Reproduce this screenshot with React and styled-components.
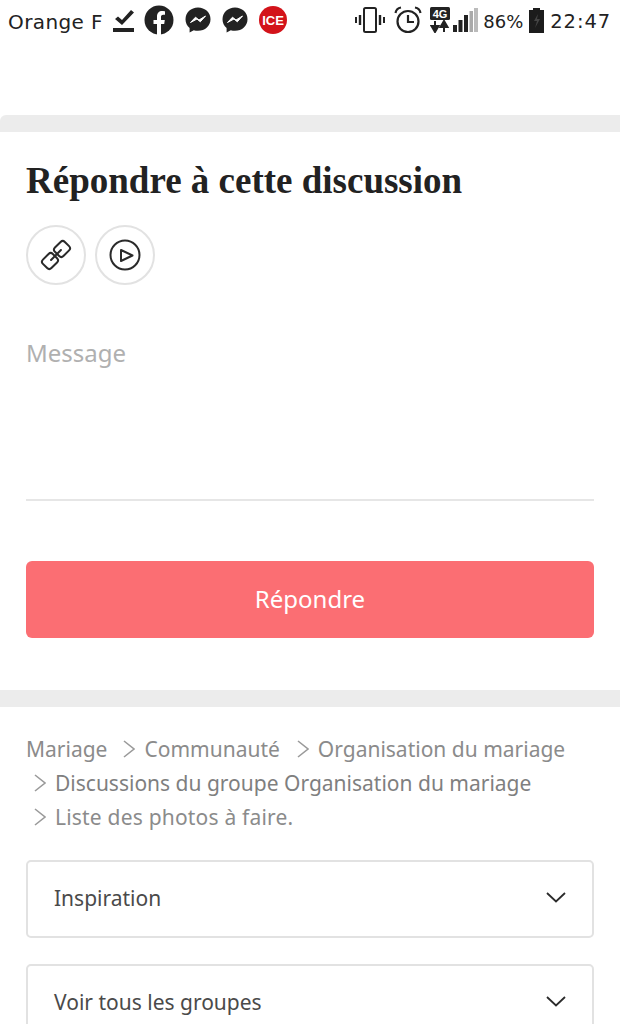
import React from "react";
import styled, { createGlobalStyle } from "styled-components";

const Global = createGlobalStyle`
  html, body { margin: 0; padding: 0; background: #fff; }
  body { font-family: "Noto Sans", sans-serif; overflow: hidden; }
`;

const Page = styled.div`
  width: 620px;
  height: 1024px;
  overflow: hidden;
`;

const StatusBar = styled.div`
  height: 40px;
  padding: 0 9px 0 8px;
  display: flex;
  align-items: center;
  justify-content: space-between;
  color: #222;
  box-sizing: border-box;
`;

const StatusGroup = styled.div`
  display: flex;
  align-items: center;
  gap: ${p => p.$gap || 8}px;
`;

const StatusText = styled.span`
  font-family: "DejaVu Sans", sans-serif;
  font-size: ${p => p.$size || 19}px;
  letter-spacing: ${p => p.$spacing || 0}px;
  margin-top: 3px;
  white-space: nowrap;
`;

const Spacer = styled.div`
  height: 75px;
`;

const Band = styled.div`
  height: 17px;
  background: #ececec;
  border-radius: ${p => (p.$round ? "6px 0 0 0" : "0")};
`;

const ReplySection = styled.section`
  height: 558px;
  box-sizing: border-box;
  padding: 26px 26px 0;
`;

const Title = styled.h2`
  margin: 0;
  font-family: "Liberation Serif", serif;
  font-weight: 700;
  font-size: 37px;
  line-height: 46px;
  white-space: nowrap;
  color: #222;
`;

const Tools = styled.div`
  display: flex;
  gap: 9px;
  margin-top: 21px;
`;

const RoundButton = styled.div`
  width: 60px;
  height: 60px;
  box-sizing: border-box;
  border: 2px solid #e2e2e2;
  border-radius: 50%;
  display: flex;
  align-items: center;
  justify-content: center;
  color: #2a2a2a;
`;

const MessageField = styled.div`
  height: 161px;
  margin-top: 53px;
  border-bottom: 2px solid #e6e6e6;
  font-size: 24px;
  line-height: 30px;
  color: #b0b0b0;
`;

const SubmitButton = styled.div`
  margin-top: 60px;
  height: 77px;
  box-sizing: border-box;
  padding-bottom: 2px;
  border-radius: 6px;
  background: #fb6e73;
  color: #fff;
  font-size: 24px;
  display: flex;
  align-items: center;
  justify-content: center;
`;

const Lower = styled.div`
  padding: 25px 26px 0;
`;

const Crumbs = styled.div`
  font-size: 21px;
  line-height: 34px;
  color: #8b8b8b;
`;

const CrumbLine = styled.div`
  display: flex;
  align-items: center;
  white-space: nowrap;
  gap: 9px;
  padding-left: ${p => p.$indent || 0}px;
`;

const Crumb = styled.span`
  color: ${p => (p.$strong ? "#7f7f7f" : "#8b8b8b")};
  margin-right: ${p => p.$after || 0}px;
  letter-spacing: ${p => p.$spacing || 0}px;
`;

const Select = styled.div`
  height: 78px;
  margin-top: 26px;
  box-sizing: border-box;
  border: 2px solid #e2e2e2;
  border-radius: 5px;
  padding: 0 26px 3px 26px;
  display: flex;
  align-items: center;
  justify-content: space-between;
  font-size: 21px;
  color: #4a4a4a;
`;

const Chevron = () => (
  <svg width="20" height="11" viewBox="0 0 20 11" fill="none" stroke="#2b2b2b" strokeWidth="1.8">
    <path d="M1 1 L10 9.5 L19 1" />
  </svg>
);

const CrumbArrow = () => (
  <svg width="12" height="20" viewBox="0 0 12 20" fill="none" stroke="#9a9a9a" strokeWidth="1.6">
    <path d="M1 2 L11 10 L1 18" />
  </svg>
);

const LinkIcon = () => (
  <svg width="32" height="32" viewBox="0 0 32 32" fill="none" stroke="currentColor" strokeWidth="2" strokeLinecap="round">
    <g transform="rotate(-45 16 16)">
      <rect x="0.5" y="10" width="14" height="12" rx="3" />
      <rect x="17.5" y="10" width="14" height="12" rx="3" />
      <path d="M9 16 H23" />
    </g>
  </svg>
);

const PlayIcon = () => (
  <svg width="32" height="32" viewBox="0 0 32 32" fill="none" stroke="currentColor" strokeWidth="2">
    <circle cx="16" cy="16" r="14.5" />
    <path d="M12 11 L23.5 16.5 L12 22 Z" strokeLinejoin="round" />
  </svg>
);

const CheckTray = () => (
  <svg width="21" height="24" viewBox="0 0 21 24" fill="#222">
    <path d="M2 11 L5 8.5 L9 12 L18 2 L21 4.5 L9 17 Z" />
    <rect x="0" y="20" width="21" height="4" />
  </svg>
);

const Facebook = () => (
  <svg width="30" height="30" viewBox="0 0 30 30">
    <circle cx="15" cy="15" r="14.5" fill="#222" />
    <path d="M13 30 V19 H9.5 V15 H13 V11.5 C13 8 15 6 18.2 6 C19.6 6 21 6.3 21 6.3 V9.8 H19.2 C17.5 9.8 17 10.8 17 12 V15 H20.8 L20.2 19 H17 V30 Z" fill="#fff" />
  </svg>
);

const Messenger = () => (
  <svg width="26" height="26" viewBox="0 0 26 26">
    <path d="M13 0.5 C6 0.5 0.5 5.5 0.5 12.2 C0.5 15.8 2 18.8 4.6 20.9 V25.5 L8.8 23.2 C10.1 23.6 11.5 23.8 13 23.8 C20 23.8 25.5 18.8 25.5 12.2 C25.5 5.5 20 0.5 13 0.5 Z" fill="#222" />
    <path d="M5.5 15.5 L10.5 10.2 L14 13 L20.5 9 L15.3 14.8 L12 12 Z" fill="#fff" stroke="#fff" strokeWidth="1" />
  </svg>
);

const IceBadge = () => (
  <svg width="28" height="28" viewBox="0 0 28 28">
    <circle cx="14" cy="14" r="14" fill="#d3131a" />
    <text x="14" y="19" textAnchor="middle" fontFamily="Liberation Sans, sans-serif" fontWeight="700" fontSize="13" fill="#fff">ICE</text>
  </svg>
);

const Vibrate = () => (
  <svg width="30" height="26" viewBox="0 0 30 26" fill="none" stroke="#222">
    <rect x="9" y="1" width="12" height="24" rx="1.5" strokeWidth="2" />
    <path d="M5 8 V18 M25 8 V18" strokeWidth="2.4" />
    <path d="M1 10 V16 M29 10 V16" strokeWidth="2" />
  </svg>
);

const Alarm = () => (
  <svg width="28" height="28" viewBox="0 0 28 28" fill="none" stroke="#222" strokeWidth="2.2">
    <circle cx="14" cy="15.5" r="10.5" />
    <path d="M14 9 V16 H20" />
    <path d="M1.5 7 C2 4 4 2 7 1.5 M26.5 7 C26 4 24 2 21 1.5" />
  </svg>
);

const Network = () => (
  <svg width="20" height="26" viewBox="0 0 20 26">
    <rect x="0" y="0" width="20" height="13" rx="1.5" fill="#222" />
    <text x="10" y="11" textAnchor="middle" fontFamily="Liberation Sans, sans-serif" fontWeight="700" fontSize="11" fill="#fff">4G</text>
    <path d="M5 14 V21 M1.5 19 L5 25 L8.5 19 Z M14 25 V18 M10.5 20 L14 14 L17.5 20 Z" stroke="#222" strokeWidth="2" fill="#222" />
  </svg>
);

const Signal = () => (
  <svg width="25" height="24" viewBox="0 0 25 24">
    <rect x="0" y="17" width="4" height="7" fill="#222" />
    <rect x="5.5" y="12" width="4" height="12" fill="#222" />
    <rect x="11" y="7" width="4" height="17" fill="#222" />
    <rect x="16.5" y="3" width="3.5" height="21" fill="#aaa" />
    <rect x="21" y="0" width="4" height="24" fill="#bbb" />
  </svg>
);

const Battery = () => (
  <svg width="15" height="25" viewBox="0 0 15 25">
    <path d="M4 0 H11 V2 H15 V25 H0 V2 H4 Z" fill="#1c1c1c" />
    <path d="M9 6 L5 13 H8 L6 20 L11 11 H8 Z" fill="#444" />
  </svg>
);

export default function App() {
  return (
    <Page>
      <Global />
      <StatusBar>
        <StatusGroup $gap={10}>
          <StatusText $size={20} $spacing={0.4}>Orange F</StatusText>
          <CheckTray />
          <StatusGroup $gap={11}>
            <Facebook />
            <Messenger />
            <Messenger />
            <IceBadge />
          </StatusGroup>
        </StatusGroup>
        <StatusGroup $gap={6}>
          <StatusGroup $gap={5}>
            <StatusGroup $gap={9}>
              <Vibrate />
              <StatusGroup $gap={8}>
                <Alarm />
                <StatusGroup $gap={3}>
                  <Network />
                  <Signal />
                </StatusGroup>
              </StatusGroup>
            </StatusGroup>
            <StatusText $size={18}>86%</StatusText>
          </StatusGroup>
          <Battery />
          <StatusText $size={19.5} $spacing={0.9}>22:47</StatusText>
        </StatusGroup>
      </StatusBar>
      <Spacer />
      <Band $round />
      <ReplySection>
        <Title>Répondre à cette discussion</Title>
        <Tools>
          <RoundButton><LinkIcon /></RoundButton>
          <RoundButton><PlayIcon /></RoundButton>
        </Tools>
        <MessageField>Message</MessageField>
        <SubmitButton>Répondre</SubmitButton>
      </ReplySection>
      <Band />
      <Lower>
        <Crumbs>
          <CrumbLine>
            <Crumb $after={7}>Mariage</Crumb>
            <CrumbArrow />
            <Crumb $after={8}>Communauté</Crumb>
            <CrumbArrow />
            <Crumb>Organisation du mariage</Crumb>
          </CrumbLine>
          <CrumbLine $indent={8}>
            <CrumbArrow />
            <Crumb $strong>Discussions du groupe Organisation du mariage</Crumb>
          </CrumbLine>
          <CrumbLine $indent={8}>
            <CrumbArrow />
            <Crumb $spacing={0.2}>Liste des photos à faire.</Crumb>
          </CrumbLine>
        </Crumbs>
        <Select>Inspiration<Chevron /></Select>
        <Select>Voir tous les groupes<Chevron /></Select>
      </Lower>
    </Page>
  );
}
